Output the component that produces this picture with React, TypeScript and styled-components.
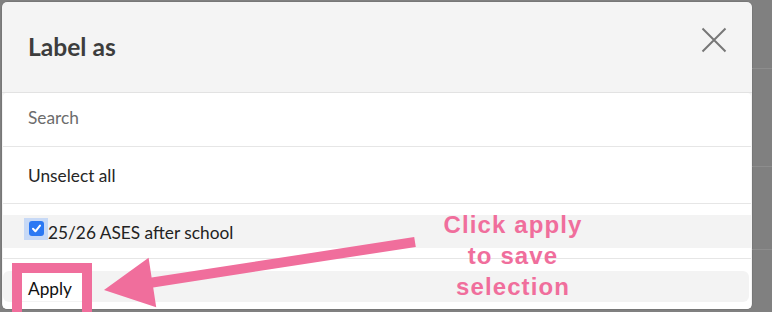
import React from "react";
import styled, { createGlobalStyle } from "styled-components";

const PINK = "#f06e9c";

const Global = createGlobalStyle`
  html, body { margin: 0; padding: 0; background: #808080; }
  body { font-family: Lato, "Open Sans", sans-serif; }
  * { box-sizing: border-box; }
`;

const Page = styled.div`
  position: relative;
  width: 772px;
  height: 312px;
  overflow: hidden;
  display: flex;
  align-items: flex-start;
  background: #808080;
`;

const LeftGutter = styled.div`
  width: 2px;
  align-self: stretch;
  flex: none;
`;

const RightStrip = styled.div`
  flex: 1;
  align-self: stretch;
  display: flex;
  flex-direction: column;
`;

const StripRow = styled.div<{ $h: number }>`
  height: ${(p) => p.$h}px;
  border-bottom: 1px solid #8d8d8d;
  flex: none;
`;

const Dialog = styled.div`
  margin-top: 1.5px;
  width: 750px;
  height: 307px;
  background: #f4f4f4;
  border-radius: 5px;
  overflow: hidden;
  display: flex;
  flex-direction: column;
  box-shadow: 0 0 0 0.5px #6e6e6e;
`;

const Header = styled.div`
  height: 91px;
  flex: none;
  display: flex;
  justify-content: space-between;
  align-items: flex-start;
  padding: 0 24px 0 26px;
  border-bottom: 1px solid #e2e2e2;
`;

const Title = styled.h2`
  margin: 31.5px 0 0;
  font-family: Lato, sans-serif;
  font-weight: 700;
  font-size: 24.6px;
  line-height: 28px;
  color: #3d3d3d;
`;

const CloseButton = styled.button`
  margin-top: 24.5px;
  width: 28px;
  height: 28px;
  padding: 0;
  border: none;
  background: transparent;
  display: flex;
  align-items: center;
  justify-content: center;
`;

const Body = styled.div`
  flex: 1;
  margin: 0 1px;
  background: #ffffff;
  border-radius: 4px 4px 0 0;
  display: flex;
  flex-direction: column;
`;

const Row = styled.div<{ $h: number; $pt: number }>`
  height: ${(p) => p.$h}px;
  flex: none;
  padding: ${(p) => p.$pt}px 0 0 25px;
  border-bottom: 1px solid #e6e6e6;
`;

const RowText = styled.span<{ $muted?: boolean }>`
  display: block;
  font-size: 17.3px;
  line-height: 20px;
  color: ${(p) => (p.$muted ? "#6c6c6c" : "#262626")};
`;

const Section = styled.div<{ $h: number; $pt: number; $border?: boolean }>`
  height: ${(p) => p.$h}px;
  flex: none;
  padding-top: ${(p) => p.$pt}px;
  border-bottom: ${(p) => (p.$border ? "1px solid #e6e6e6" : "none")};
`;

const LabelItem = styled.label`
  height: 33px;
  display: flex;
  align-items: flex-start;
  padding: 3px 0 0 21px;
  background: #f3f3f3;
`;

const CheckHighlight = styled.span`
  width: 24px;
  height: 22px;
  background: #c7d9f6;
  display: flex;
  align-items: center;
  justify-content: center;
  flex: none;
`;

const CheckBox = styled.span`
  width: 15px;
  height: 15px;
  border-radius: 3px;
  background: #2b78f3;
  display: flex;
  align-items: center;
  justify-content: center;
`;

const LabelText = styled.span`
  margin-top: 5.4px;
  font-size: 17.3px;
  line-height: 20px;
  color: #222;
`;

const FooterItem = styled.div`
  height: 31px;
  margin-right: 2px;
  border-radius: 6px;
  background: #f3f3f3;
  padding: 2px 0 0 19px;
`;

const ApplyButton = styled.button`
  width: 60px;
  height: 28px;
  border: none;
  background: #ffffff;
  padding: 5px 0 0 6px;
  text-align: left;
  font-family: Lato, sans-serif;
  font-size: 17.3px;
  line-height: 20px;
  color: #111;
  display: block;
`;

const HighlightBox = styled.div`
  position: absolute;
  left: 12px;
  top: 263px;
  width: 80px;
  height: 60px;
  border: 10px solid ${PINK};
`;

const Overlay = styled.svg`
  position: absolute;
  left: 0;
  top: 0;
  pointer-events: none;
`;

const Callout = styled.div`
  position: absolute;
  left: 433px;
  top: 209px;
  width: 160px;
  text-align: center;
  font-family: "Liberation Sans", Arial, sans-serif;
  font-weight: 700;
  font-size: 24px;
  line-height: 31px;
  letter-spacing: 1.1px;
  color: ${PINK};
`;

export default function App() {
  return (
    <>
      <Global />
      <Page>
        <LeftGutter />
        <Dialog>
          <Header>
            <Title>Label as</Title>
            <CloseButton aria-label="Close">
              <svg width="26" height="26" viewBox="0 0 26 26">
                <path d="M1.5 1.5 L24.5 24.5 M24.5 1.5 L1.5 24.5" stroke="#777" strokeWidth="2" fill="none" />
              </svg>
            </CloseButton>
          </Header>
          <Body>
            <Row $h={54} $pt={15.5}>
              <RowText $muted>Search</RowText>
            </Row>
            <Row $h={57} $pt={19}>
              <RowText>Unselect all</RowText>
            </Row>
            <Section $h={55} $pt={11} $border>
              <LabelItem>
                <CheckHighlight>
                  <CheckBox>
                    <svg width="11" height="11" viewBox="0 0 11 11">
                      <path d="M2 5.8 L4.4 8.3 L9 2.6" stroke="#fff" strokeWidth="2" fill="none" strokeLinecap="round" strokeLinejoin="round" />
                    </svg>
                  </CheckBox>
                </CheckHighlight>
                <LabelText>25/26 ASES after school</LabelText>
              </LabelItem>
            </Section>
            <Section $h={49} $pt={12}>
              <FooterItem>
                <ApplyButton>Apply</ApplyButton>
              </FooterItem>
            </Section>
          </Body>
        </Dialog>
        <RightStrip>
          <StripRow $h={69} />
          <StripRow $h={98} />
          <StripRow $h={83} />
        </RightStrip>

        <HighlightBox />
        <Overlay width="772" height="312" viewBox="0 0 772 312">
          <polygon
            points="414.2,237.1 151.6,277.6 148.6,257.8 104,290 156.2,307.2 153.2,287.4 415.8,246.9"
            fill={PINK}
          />
        </Overlay>
        <Callout>
          Click apply
          <br />
          to save
          <br />
          selection
        </Callout>
      </Page>
    </>
  );
}
